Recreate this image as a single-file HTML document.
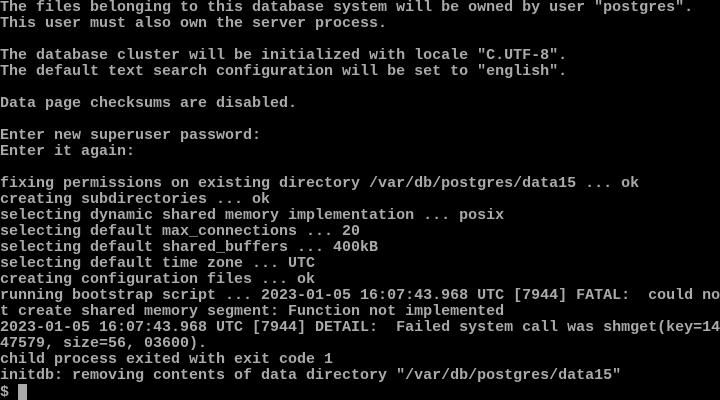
<!DOCTYPE html>
<html><head><style>
html,body{margin:0;padding:0;background:#000;width:720px;height:400px;overflow:hidden}
pre{margin:0;font-family:"Liberation Mono",monospace;font-size:15px;line-height:16px;color:#aaa;font-weight:bold;letter-spacing:0;white-space:pre}
.c{display:inline-block;width:9px;height:16px;background:#aaa;vertical-align:-4px}
</style></head><body><pre>The files belonging to this database system will be owned by user "postgres".
This user must also own the server process.

The database cluster will be initialized with locale "C.UTF-8".
The default text search configuration will be set to "english".

Data page checksums are disabled.

Enter new superuser password:
Enter it again:

fixing permissions on existing directory /var/db/postgres/data15 ... ok
creating subdirectories ... ok
selecting dynamic shared memory implementation ... posix
selecting default max_connections ... 20
selecting default shared_buffers ... 400kB
selecting default time zone ... UTC
creating configuration files ... ok
running bootstrap script ... 2023-01-05 16:07:43.968 UTC [7944] FATAL:  could no
t create shared memory segment: Function not implemented
2023-01-05 16:07:43.968 UTC [7944] DETAIL:  Failed system call was shmget(key=14
47579, size=56, 03600).
child process exited with exit code 1
initdb: removing contents of data directory "/var/db/postgres/data15"
$ <span class="c"></span></pre></body></html>
